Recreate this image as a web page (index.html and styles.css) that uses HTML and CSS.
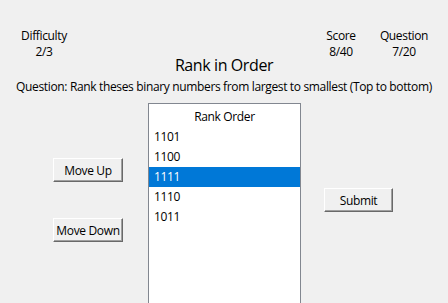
FILE: index.html
```html
<!DOCTYPE html>
<html>
<head>
  <title>Rank in Order</title>
  <link rel="stylesheet" href="styles.css">
</head>
<body>
  <div class="window">
    <div class="stats">
      <div class="stat">
        <div>Difficulty</div>
        <div>2/3</div>
      </div>
      <div class="stat push">
        <div>Score</div>
        <div>8/40</div>
      </div>
      <div class="stat">
        <div>Question</div>
        <div>7/20</div>
      </div>
    </div>
    <h1 class="title">Rank in Order</h1>
    <p class="question">Question: Rank theses binary numbers from largest to smallest (Top to bottom)</p>
    <main class="work">
      <div class="moves">
        <button class="btn move-up">Move Up</button>
        <button class="btn move-down">Move Down</button>
      </div>
      <ul class="listbox">
        <li class="list-head">Rank Order</li>
        <li>1101</li>
        <li>1100</li>
        <li class="selected">1111</li>
        <li>1110</li>
        <li>1011</li>
      </ul>
      <div class="actions">
        <button class="btn submit">Submit</button>
      </div>
    </main>
  </div>
</body>
</html>
```

FILE: styles.css
```css
* {
  box-sizing: border-box;
  margin: 0;
  padding: 0;
}
body {
  background-color: #f0f0f0;
  font-family: "Open Sans", "Noto Sans", sans-serif;
  font-size: 12px;
  letter-spacing: -0.35px;
  color: #000;
}
.window {
  width: 448px;
  height: 303px;
  overflow: hidden;
}
.stats {
  display: flex;
  gap: 3px;
  padding: 28px 14px 0 14px;
  line-height: 16px;
}
.stat {
  width: 60px;
  text-align: center;
}
.push {
  margin-left: auto;
}
.title {
  margin-top: -5px;
  font-size: 16px;
  font-weight: normal;
  letter-spacing: -0.4px;
  line-height: 20px;
  text-align: center;
}
.question {
  margin-top: 4px;
  line-height: 16px;
  text-align: center;
  white-space: nowrap;
}
.work {
  display: flex;
  margin-top: 8px;
}
.moves {
  display: flex;
  flex-direction: column;
  width: 70px;
  margin-left: 53px;
  margin-right: 25px;
  padding-top: 55px;
}
.btn {
  font-family: inherit;
  font-size: 12px;
  letter-spacing: -0.35px;
  height: 24px;
  background-color: #f0f0f0;
  border: 1px solid;
  border-color: #fff #696969 #696969 #fff;
  box-shadow: inset -1px -1px #a0a0a0;
  padding: 0;
  white-space: nowrap;
}
.move-up {
  width: 70px;
}
.move-down {
  width: 70px;
  margin-top: 36px;
}
.listbox {
  list-style: none;
  width: 153px;
  height: 220px;
  background-color: #fff;
  border: 1px solid #828790;
  padding-top: 3px;
}
.listbox li {
  height: 20px;
  line-height: 20px;
  padding-left: 5px;
}
.listbox .list-head {
  padding-left: 0;
  text-align: center;
}
.listbox .selected {
  background-color: #0078d7;
  color: #fff;
}
.actions {
  margin-left: 23px;
  padding-top: 85px;
}
.submit {
  width: 69px;
}
```
